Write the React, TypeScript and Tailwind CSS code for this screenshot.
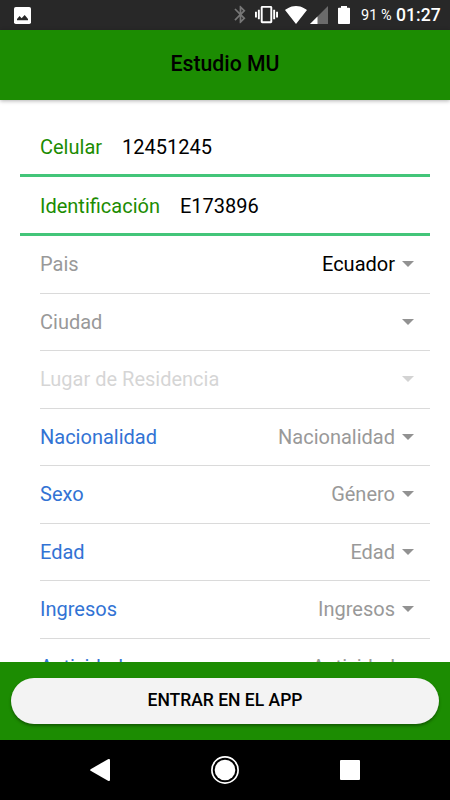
const campos = [
  { label: 'Pais', valor: 'Ecuador', labelColor: 'text-[#999999]', valorColor: 'text-black' },
  { label: 'Ciudad', valor: '', labelColor: 'text-[#999999]', valorColor: 'text-[#999999]' },
  { label: 'Lugar de Residencia', valor: '', labelColor: 'text-[#999999]', valorColor: 'text-[#999999]', deshabilitado: true },
  { label: 'Nacionalidad', valor: 'Nacionalidad', labelColor: 'text-[#3273d4]', valorColor: 'text-[#999999]' },
  { label: 'Sexo', valor: 'Género', labelColor: 'text-[#3273d4]', valorColor: 'text-[#999999]' },
  { label: 'Edad', valor: 'Edad', labelColor: 'text-[#3273d4]', valorColor: 'text-[#999999]' },
  { label: 'Ingresos', valor: 'Ingresos', labelColor: 'text-[#3273d4]', valorColor: 'text-[#999999]' },
  { label: 'Actividad', valor: 'Actividad', labelColor: 'text-[#3273d4]', valorColor: 'text-[#999999]' },
]

function BarraEstado() {
  return (
    <div className="flex h-[30px] shrink-0 items-center bg-[#282828] pr-[10px] pl-[14px] text-white">
      <svg className="h-[17px] w-[17px]" viewBox="0 0 17 17">
        <rect width="17" height="17" rx="1.8" fill="#fff" />
        <path d="M3 13.3V12l2.6-3 2 2.2L10.7 8l3.3 4v1.3z" fill="#282828" />
      </svg>

      <div className="ml-auto flex items-center">
        <svg className="h-[21px] w-[21px]" viewBox="0 0 24 24" fill="#777">
          <path d="M17.71 7.71L12 2h-1v7.59L6.41 5 5 6.41 10.59 12 5 17.59 6.41 19 11 14.41V22h1l5.71-5.71-4.3-4.29 4.3-4.29zM13 5.83l1.88 1.88L13 9.59V5.83zm1.88 10.46L13 18.17v-3.76l1.88 1.88z" />
        </svg>
        <svg className="ml-1 h-[23px] w-[23px]" viewBox="0 0 24 24" fill="#fff">
          <path d="M0 15h2V9H0v6zm3 2h2V7H3v10zm19-8v6h2V9h-2zm-3 8h2V7h-2v10zM16.5 3h-9C6.67 3 6 3.67 6 4.5v15c0 .83.67 1.5 1.5 1.5h9c.83 0 1.5-.67 1.5-1.5v-15c0-.83-.67-1.5-1.5-1.5zM16 19H8V5h8v14z" />
        </svg>
        <svg className="ml-[7px] h-[18px] w-[22px]" viewBox="0 0 22 18" fill="#fff">
          <path d="M11 18L0 4.1C.5 3.7 4.7 0 11 0s10.5 3.7 11 4.1z" />
        </svg>
        <svg className="ml-[3px] h-[18px] w-[18px]" viewBox="0 0 18 18">
          <path d="M0 18L18 0v18z" fill="#6b6b6b" />
          <path d="M0 18l7.5-7.5V18z" fill="#fff" />
        </svg>
        <svg className="ml-[10px] h-[18px] w-3" viewBox="0 0 12 18" fill="#fff">
          <path d="M3 0h6v1.8h2.2q.8 0 .8.8v14.6q0 .8-.8.8H.8q-.8 0-.8-.8V2.600q0-.8.8-.8H3z" />
        </svg>
        <span className="mt-px ml-[11px] w-[35px] text-[14.5px] whitespace-nowrap">91 %</span>
        <span className="mt-px w-[44px] text-[17.6px] font-medium whitespace-nowrap">01:27</span>
      </div>
    </div>
  )
}

function CampoTexto({ label, valor }: { label: string; valor: string }) {
  return (
    <div className="flex h-[59px] shrink-0 items-center gap-5 border-b-[3px] border-[#43c579] pt-0.5 pl-5">
      <label className="text-[#1c8c02]">{label}</label>
      <span className="text-black">{valor}</span>
    </div>
  )
}

function CampoSelect({ campo }: { campo: any }) {
  return (
    <div className="ml-5 h-[57.5px] shrink-0 border-b border-[#dadada]">
      <div className={`flex h-full items-center pr-4 ${campo.deshabilitado ? 'opacity-40' : ''}`}>
        <span className={campo.labelColor}>{campo.label}</span>
        <span className={`ml-auto ${campo.valorColor}`}>{campo.valor}</span>
        <svg className="ml-[7px] h-[6px] w-3" viewBox="0 0 12 6" fill="#929292">
          <path d="M0 0h12L6 6z" />
        </svg>
      </div>
    </div>
  )
}

export default function App() {
  return (
    <main className="flex h-[800px] w-[450px] flex-col overflow-hidden bg-white font-['Roboto',sans-serif]">
      <BarraEstado />

      <header className="z-10 flex h-[70px] shrink-0 items-center justify-center bg-[#1c8c02] pb-[3px] shadow-[0_1px_4px_rgba(0,0,0,0.3)]">
        <h1 className="text-[21.25px] font-medium text-black">Estudio MU</h1>
      </header>

      <section className="flex min-h-0 flex-1 flex-col overflow-hidden px-5 pt-[18px] text-[20px]">
        <CampoTexto label="Celular" valor="12451245" />
        <CampoTexto label="Identificación" valor="E173896" />
        {campos.map((campo) => (
          <CampoSelect key={campo.label} campo={campo} />
        ))}
      </section>

      <footer className="h-[78px] shrink-0 bg-[#1c8c02] px-[11px] pt-4">
        <button className="h-[46px] w-full rounded-full bg-[#f3f3f3] pb-0.5 text-[17.5px] font-medium text-black shadow-[0_2px_3px_rgba(0,0,0,0.35)]">
          ENTRAR EN EL APP
        </button>
      </footer>

      <nav className="flex h-[60px] shrink-0 items-center justify-between bg-black px-[90px]">
        <svg className="h-[22px] w-5" viewBox="0 0 20 22" fill="#fff">
          <path d="M.6 10.2L18 .2q2-.8 2 1v19.6q0 1.8-2 1L.6 11.8q-1-.8 0-1.6z" />
        </svg>
        <svg className="h-7 w-7" viewBox="0 0 28 28">
          <circle cx="14" cy="14" r="13.1" fill="none" stroke="#fff" strokeWidth="1.7" />
          <circle cx="14" cy="14" r="10.3" fill="#fff" />
        </svg>
        <div className="h-5 w-5 rounded-[1px] bg-white" />
      </nav>
    </main>
  )
}
